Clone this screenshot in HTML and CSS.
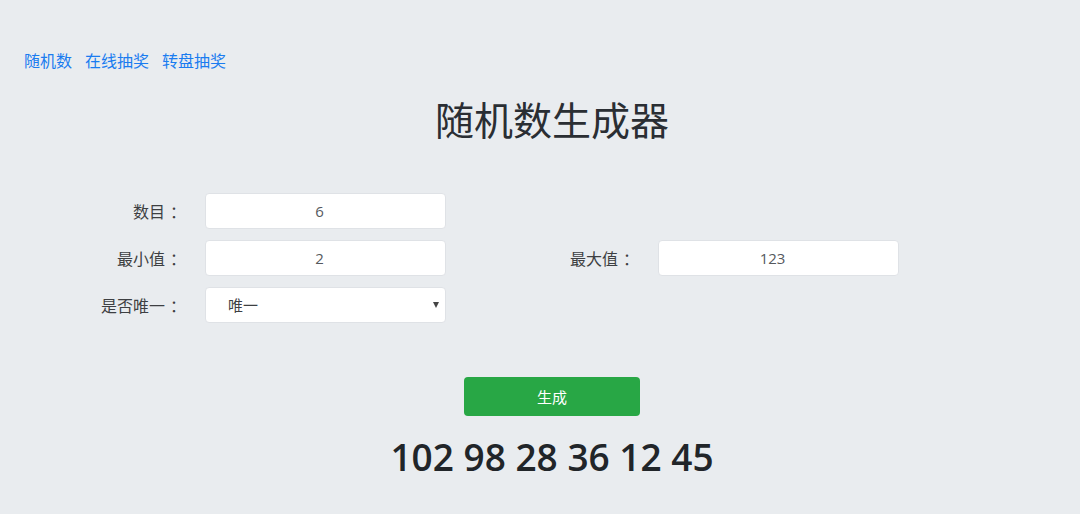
FILE: index.html
```html
<!DOCTYPE html>
<html lang="zh-CN">
<head>
    <meta charset="UTF-8">
    <meta name="viewport" content="width=device-width, initial-scale=1.0">
    <title>随机数生成器</title>
    <link rel="stylesheet" href="styles.css">
</head>
<body>
    <div class="page">
        <!-- nav -->
        <nav class="top-nav">
            <a href="#">随机数</a>
            <a href="#">在线抽奖</a>
            <a href="#">转盘抽奖</a>
        </nav>

        <h1 class="title">随机数生成器</h1>

        <!-- form -->
        <form class="gen-form">
            <label class="field-label">数目<span class="colon">：</span></label>
            <input class="field-input" type="text" value="6">
            <span></span>
            <span></span>

            <label class="field-label">最小值<span class="colon">：</span></label>
            <input class="field-input" type="text" value="2">
            <label class="field-label">最大值<span class="colon">：</span></label>
            <input class="field-input" type="text" value="123">

            <label class="field-label">是否唯一<span class="colon">：</span></label>
            <div class="select-wrap">
                <select class="field-select">
                    <option>唯一</option>
                    <option>不唯一</option>
                </select>
            </div>
        </form>

        <div class="actions">
            <button class="gen-button" type="button">生成</button>
        </div>

        <div class="result">102 98 28 36 12 45</div>
    </div>
</body>
</html>
```

FILE: styles.css
```css
body {
    margin: 0;
    background: #e9ecef;
    font-family: "Open Sans", "Noto Sans CJK SC", sans-serif;
    color: #212529;
}

.page {
    padding-left: 24px;
    padding-top: 49px;
}

/* nav */
.top-nav {
    display: flex;
    gap: 13px;
    font-size: 16px;
    line-height: 24px;
}

.top-nav a {
    color: #1a7cf0;
    text-decoration: none;
}

/* title */
.title {
    margin: 21px 0 0;
    text-align: center;
    font-family: "Noto Sans CJK SC", sans-serif;
    font-weight: 400;
    font-size: 39px;
    line-height: 48px;
    color: #2a2e33;
}

/* form */
.gen-form {
    display: grid;
    grid-template-columns: 157px 241px 164px 241px;
    column-gap: 24px;
    row-gap: 11px;
    margin-top: 51px;
}

.field-label {
    text-align: right;
    font-family: "Noto Sans CJK SC", sans-serif;
    font-size: 16px;
    line-height: 36px;
    color: #3d3f42;
}

/* colon sits a bit right of the text */
.colon {
    display: inline-block;
    padding-left: 5px;
    margin-right: -5px;
}

.field-input,
.field-select {
    box-sizing: border-box;
    width: 241px;
    height: 36px;
    border: 1px solid #dfe2e6;
    border-radius: 4px;
    background: #fff;
    font-family: "Open Sans", "Noto Sans CJK SC", sans-serif;
    font-size: 15px;
    color: #55595e;
}

.field-input {
    text-align: center;
    padding: 0 24px 0 12px;
}

.select-wrap {
    position: relative;
}

.field-select {
    appearance: none;
    -webkit-appearance: none;
    padding: 0 20px 0 22px;
    color: #3d3f42;
}

.select-wrap::after {
    content: "";
    position: absolute;
    right: 7px;
    top: 15px;
    border-left: 3px solid transparent;
    border-right: 3px solid transparent;
    border-top: 6px solid #444;
}

/* button */
.actions {
    display: flex;
    justify-content: center;
    margin-top: 54px;
}

.gen-button {
    width: 176px;
    height: 39px;
    border: none;
    border-radius: 4px;
    background: #28a745;
    color: #fff;
    font-family: "Noto Sans CJK SC", sans-serif;
    font-size: 15px;
}

/* result */
.result {
    margin-top: 16px;
    text-align: center;
    font-size: 37px;
    font-weight: 600;
    line-height: 50px;
    color: #212529;
}
```
